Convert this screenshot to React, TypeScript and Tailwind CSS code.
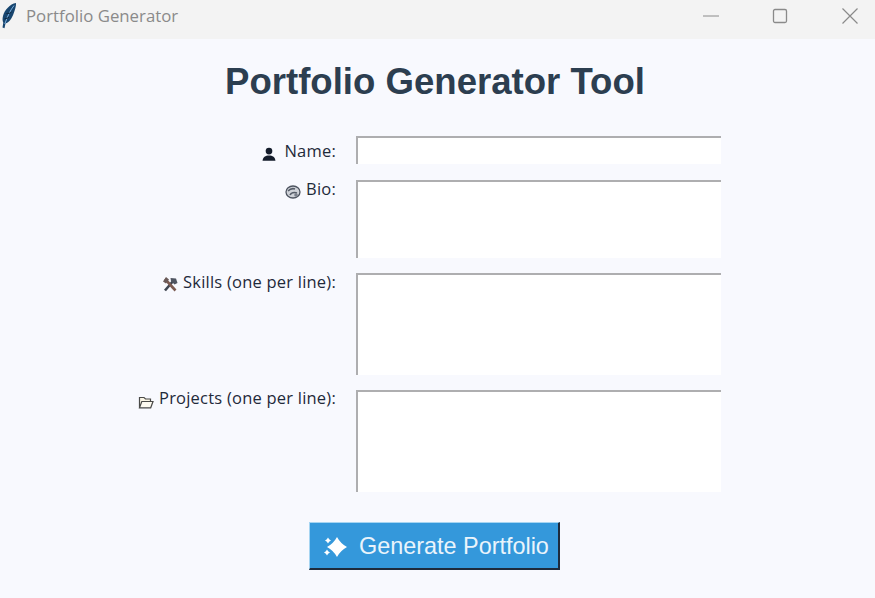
import React from "react";

const Feather = () => (
  <svg width="18" height="28" viewBox="0 0 18 28" className="shrink-0">
    <path d="M16 1C10 2 4.500 8 3 14c-.7 2.800-.5 5 .3 6.800L2.500 25.500l2 .7 1-4.700c3.500-1 6.500-5 8.300-10.500C15 7.500 16.300 4 16 1z" fill="#17456f" />
    <path d="M14 3.500C10.500 8 7.500 14 4.800 22" stroke="#7fb2e0" strokeWidth="1" fill="none" />
    <path d="M4.500 17c2-1 3.500-.5 4.500-2M6.500 11.500c1.500 0 3.500 0 5-1.500" stroke="#0c2238" strokeWidth="1" fill="none" />
  </svg>
);

const Person = () => (
  <svg width="14" height="14" viewBox="0 0 13 13" className="shrink-0">
    <circle cx="6.500" cy="3.800" r="3.100" fill="#141c2b" />
    <path d="M.5 12.800c.2-3.300 2.700-5 6-5s5.800 1.700 6 5z" fill="#141c2b" />
  </svg>
);

const Palette = () => (
  <svg width="16" height="14" viewBox="0 0 16 14" className="shrink-0">
    <ellipse cx="8" cy="7" rx="7" ry="6" fill="#cfd2d8" stroke="#4d5460" strokeWidth="1.300" />
    <path d="M3 6c2-2 4-3 7-2M5 10c1-2 4-3 7-2" stroke="#555c68" strokeWidth="1.600" fill="none" />
    <circle cx="11" cy="10" r="1.800" fill="#7a808b" />
  </svg>
);

const Tools = () => (
  <svg width="16" height="16" viewBox="0 0 16 16" className="shrink-0">
    <path d="M3 14.500L12 4" stroke="#3f4550" strokeWidth="2.600" />
    <path d="M3 3l10.500 11.500" stroke="#7b5a50" strokeWidth="2.600" />
    <path d="M8.500 2l5.500 .5 1.500 4.500-3 1.500-3.500-3.500z" fill="#4f5561" />
    <path d="M1 5.500l3-4.500 3 2.500-3 4z" fill="#6a5a58" />
  </svg>
);

const Folder = () => (
  <svg width="16" height="14" viewBox="0 0 16 14" className="shrink-0">
    <path d="M1.500 12.500V2.500h4.500l1.500 1.500h5V6.500" fill="#fbf6e6" stroke="#4a4a48" strokeWidth="1.200" />
    <path d="M1.500 12.800L3.800 6.500h11.200l-2.300 6.300z" fill="#fdfaf0" stroke="#4a4a48" strokeWidth="1.200" />
  </svg>
);

const Sparkles = () => (
  <svg width="26" height="26" viewBox="0 0 26 26" className="shrink-0">
    <path d="M14 3Q17.500 9.500 24 13Q17.500 16.500 14 23Q10.500 16.500 4 13Q10.500 9.500 14 3z" fill="#fff" />
    <path d="M5 3.500Q5.800 5.300 8 6.500Q5.800 7.700 5 9.500Q4.200 7.700 2 6.500Q4.200 5.300 5 3.500z" fill="#fff" />
    <path d="M4 15.500Q4.700 17.300 7 18.500Q4.700 19.700 4 21.500Q3.300 19.700 1 18.500Q3.300 17.300 4 15.500z" fill="#fff" />
  </svg>
);

function Row({
  icon,
  label,
  h,
  mb,
  labelPos,
  iconMt,
  gap,
}: {
  icon: React.ReactNode;
  label: string;
  h: string;
  mb: string;
  labelPos: string;
  iconMt: string;
  gap: string;
}) {
  return (
    <div className={`flex ${mb}`}>
      <div className={`w-[336px] flex justify-end items-start ${gap} text-[16.500px] tracking-[0.22px] leading-[20px] text-[#1f2a3a]`}>
        <span className={iconMt}>{icon}</span>
        <span className={labelPos}>{label}</span>
      </div>
      <div className={`ml-[20px] w-[365px] ${h} bg-white border-t-2 border-l-2 border-[#aeaeb0]`} />
    </div>
  );
}

export default function App() {
  return (
    <div className="w-[875px] h-[598px] overflow-hidden bg-[#f8f9fe] flex flex-col font-['Open_Sans','Noto_Sans',sans-serif]">
      <div className="h-[39px] bg-[#f3f3f3] flex items-center shrink-0 pb-[8px]">
        <div className="w-[26px]">
          <Feather />
        </div>
        <span className="text-[16.800px] text-[#8a8a8a]">Portfolio Generator</span>
        <div className="ml-auto flex items-center">
          <svg width="18" height="18" viewBox="0 0 18 18" className="mr-[52px]">
            <path d="M1 9h16" stroke="#8a8a8a" strokeWidth="1" />
          </svg>
          <svg width="16" height="16" viewBox="0 0 16 16" className="mr-[53px]">
            <rect x="1.500" y="1.500" width="13" height="13" rx="1.500" fill="none" stroke="#8a8a8a" strokeWidth="1.300" />
          </svg>
          <svg width="18" height="18" viewBox="0 0 18 18" className="mr-[16px]">
            <path d="M1.500 1.500l15 15M16.500 1.500l-15 15" stroke="#8a8a8a" strokeWidth="1.200" />
          </svg>
        </div>
      </div>
      <h1 className="text-center pr-[5px] text-[36.600px] leading-[38px] font-bold text-[#2c3e50] mt-[24px] mb-[35px] font-['Liberation_Sans',Arial,sans-serif]">
        Portfolio Generator Tool
      </h1>
      <Row icon={<Person />} label="Name:" h="h-[28px]" mb="mb-[16px]" labelPos="mt-[5px]" iconMt="mt-[11px]" gap="gap-[8px]" />
      <Row icon={<Palette />} label="Bio:" h="h-[78px]" mb="mb-[15px]" labelPos="-mt-[1px]" iconMt="mt-[5px]" gap="gap-[5px]" />
      <Row icon={<Tools />} label="Skills (one per line):" h="h-[102px]" mb="mb-[15px]" labelPos="-mt-[1px]" iconMt="mt-[3px]" gap="gap-[5px]" />
      <Row icon={<Folder />} label="Projects (one per line):" h="h-[102px]" mb="mb-[30px]" labelPos="-mt-[2px]" iconMt="mt-[5px]" gap="gap-[5px]" />
      <div className="flex justify-center">
        <button className="w-[251px] h-[48px] ml-[-6px] bg-[#3498db] border-t border-l border-t-[#a6d5f2] border-l-[#a6d5f2] border-r-2 border-b-2 border-r-[#1e2b3c] border-b-[#1e2b3c] flex items-center pl-[13px] pt-[2px] gap-[10px] text-[23.400px] text-[#eaf4fb] font-['Liberation_Sans',Arial,sans-serif]">
          <Sparkles />
          <span>Generate Portfolio</span>
        </button>
      </div>
    </div>
  );
}
